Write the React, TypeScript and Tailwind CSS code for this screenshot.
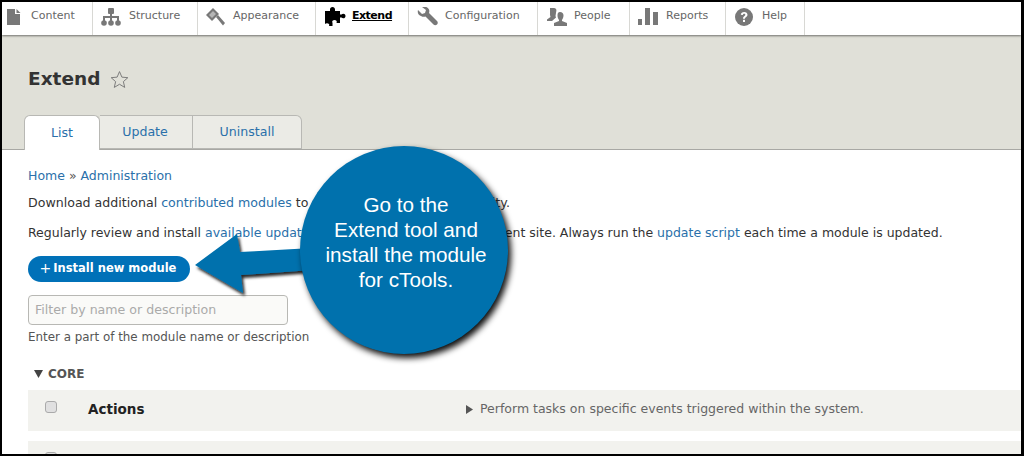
const font = "font-['DejaVu_Sans',sans-serif]";

function ContentIcon() {
  return (
    <svg width="14" height="16" viewBox="0 0 14 16" fill="#787878">
      <path d="M0 0h8v5h5v11H0z" />
      <path d="M9.500 0l4 4h-4z" />
    </svg>
  );
}

function StructureIcon() {
  return (
    <svg width="20" height="18" viewBox="0 0 20 18" fill="#787878">
      <rect x="7" y="0" width="6" height="6" rx="1" />
      <rect x="9" y="5" width="2" height="8" />
      <rect x="2" y="8" width="16" height="2" />
      <rect x="2" y="8" width="2" height="5" />
      <rect x="16" y="8" width="2" height="5" />
      <circle cx="3" cy="15" r="2.800" />
      <circle cx="10" cy="15" r="2.800" />
      <circle cx="17" cy="15" r="2.800" />
    </svg>
  );
}

function AppearanceIcon() {
  return (
    <svg width="20" height="18" viewBox="0 0 20 18" fill="#787878">
      <path d="M0 7L7 0l6 6-7 7z" />
      <path d="M3 7l4-4 3 3-4 4z" fill="#fff" opacity="0.45" />
      <path d="M10 9l2-2 7 8-2 2.500z" />
    </svg>
  );
}

function ExtendIcon() {
  return (
    <svg width="21" height="19" viewBox="0 0 21 19" fill="#000">
      <path d="M0 4h5V2.500C5 1 6 0 7.500 0S10 1 10 2.500V4h5v3.500h1.500c1-1.200 4-1.200 4 1.500s-3 2.700-4 1.500H15V16h-3.500c1-2-0.500-3-2-3s-3 1-2 3v3H4c1-2-0.500-2.800-2-2.800-.8 0-1.500.3-2 .8z" />
    </svg>
  );
}

function ConfigIcon() {
  return (
    <svg width="21" height="20" viewBox="0 0 21 20" fill="#787878">
      <path d="M1 3l4 4 3-1 1-3-4-3c3-.8 6 0 7 2.500.5 1.200.4 2.500 0 3.500l8 8c1 1 1 2.500 0 3.500s-2.500 1-3.500 0l-8-8c-1.200.5-3 .5-4.500-.5C1 8 .3 5.500 1 3z" />
    </svg>
  );
}

function PeopleIcon() {
  return (
    <svg width="20" height="18" viewBox="0 0 20 18" fill="#787878">
      <path d="M3 0h4c1.500 0 2.500 1 2.400 2.500L8.500 8l.5 1.500L5 13H0v-1.500L3.500 9 3 7z" />
      <path d="M13 4c2.200 0 3.500 1.500 3.500 3.500 0 1.500-.8 3.500-1.500 4.500v1l5 2v3H7v-3l5-2v-1c-.8-1-1.500-3-1.500-4.500C10.500 5.500 11 4 13 4z" />
    </svg>
  );
}

function ReportsIcon() {
  return (
    <svg width="20" height="18" viewBox="0 0 20 18" fill="#787878">
      <rect x="0" y="11" width="4" height="6" />
      <rect x="7" y="0" width="5" height="17" />
      <rect x="15" y="4" width="5" height="13" />
    </svg>
  );
}

function HelpIcon() {
  return (
    <svg width="18" height="18" viewBox="0 0 18 18">
      <circle cx="9" cy="9" r="9" fill="#787878" />
      <path d="M5.800 6.800C6 5 7.300 4 9.200 4c2 0 3.300 1.100 3.300 2.800 0 2.300-2.500 2.300-2.500 4H8c0-2.700 2.300-2.700 2.300-4 0-.6-.4-1-1.100-1-.8 0-1.200.5-1.300 1.200z" fill="#fff" />
      <rect x="8" y="11.800" width="2" height="2.200" fill="#fff" />
    </svg>
  );
}

const navItems = [
  { label: "Content", icon: <ContentIcon />, width: "w-[91px]", pad: "pl-[5px]", gap: "gap-[10px]" },
  { label: "Structure", icon: <StructureIcon />, width: "w-[105px]", pad: "pl-[8px]", gap: "gap-[8px]" },
  { label: "Appearance", icon: <AppearanceIcon />, width: "w-[118px]", pad: "pl-[8px]", gap: "gap-[7px]" },
  { label: "Extend", icon: <ExtendIcon />, width: "w-[93px]", pad: "pl-[9px]", gap: "gap-[6px]", active: true },
  { label: "Configuration", icon: <ConfigIcon />, width: "w-[129px]", pad: "pl-[8px]", gap: "gap-[7px]" },
  { label: "People", icon: <PeopleIcon />, width: "w-[92px]", pad: "pl-[9px]", gap: "gap-[7px]" },
  { label: "Reports", icon: <ReportsIcon />, width: "w-[96px]", pad: "pl-[8px]", gap: "gap-[8px]" },
  { label: "Help", icon: <HelpIcon />, width: "w-[79px]", pad: "pl-[9px]", gap: "gap-[9px]" },
];

function Callout() {
  return (
    <>
      <svg className="absolute left-[188px] top-[226px]" width="125" height="72" viewBox="190 228 125 72">
        <defs>
          <filter id="arrowShadow" x="-20%" y="-20%" width="140%" height="150%">
            <feDropShadow dx="2" dy="3" stdDeviation="1.500" floodColor="#000" floodOpacity="0.85" />
          </filter>
        </defs>
        <path d="M195 265L237 234L240 252L312 248V270L241 275L243 293z" fill="#0071ad" filter="url(#arrowShadow)" />
      </svg>
      <div className="absolute left-[298px] top-[144px] flex h-[208px] w-[208px] justify-center rounded-full bg-[#0071ad] pl-[4px] pt-[46px] shadow-[3px_4px_6px_rgba(0,0,0,0.95)]">
        <p className="whitespace-nowrap text-center font-['Liberation_Sans',sans-serif] text-[20.700px] leading-[25px] text-white">
          Go to the
          <br />
          Extend tool and
          <br />
          install the module
          <br />
          for cTools.
        </p>
      </div>
    </>
  );
}

export default function App() {
  return (
    <div className={`relative h-[456px] w-[1024px] overflow-hidden border-b-2 border-l-2 border-r-[3px] border-t-2 border-black bg-white ${font} text-[13px] text-[#333]`}>
      <nav className="relative z-10 flex h-[33px] bg-white shadow-[0_1px_2px_rgba(0,0,0,0.5)]">
        {navItems.map((item) => (
          <div
            key={item.label}
            className={`flex items-center border-r border-[#d8d8d4] pb-[4px] text-[11px] ${item.width} ${item.pad} ${item.gap} ${item.active ? "font-bold tracking-[-0.5px] text-black" : "text-[#666]"}`}
          >
            {item.icon}
            <span className={item.active ? "underline" : ""}>{item.label}</span>
          </div>
        ))}
      </nav>

      <header className="h-[115px] border-b border-[#a8a8a4] bg-[#e0e0d8]">
        <div className="flex items-center gap-[10px] pl-[26px] pt-[32px]">
          <h1 className="text-[18.500px] font-bold leading-[24px] text-[#333]">Extend</h1>
          <svg width="19" height="19" viewBox="0 0 24 24" fill="none" stroke="#777" strokeWidth="1.200">
            <path d="M12 2l3 7 7.500.7-5.600 5 1.700 7.300L12 18l-6.600 4 1.700-7.300-5.600-5L9 9z" />
          </svg>
        </div>
        <div className="flex pl-[22px] pt-[24px] text-[12.600px]">
          <div className="z-10 flex h-[35px] w-[76px] items-center justify-center rounded-t-md border border-b-0 border-[#b8b8b4] bg-white pt-[1px] text-[#2a70aa]">List</div>
          <div className="flex h-[34px] w-[93px] items-center justify-center border-y border-r border-[#b8b8b4] bg-[#ebebe6] pr-[2px] pt-[1px] text-[#2a70aa]">Update</div>
          <div className="flex h-[34px] w-[109px] items-center justify-center rounded-tr-md border-y border-r border-[#b8b8b4] bg-[#ebebe6] pt-[1px] text-[#2a70aa]">Uninstall</div>
        </div>
      </header>

      <main className="pl-[26px] pt-[18px]">
        <div className="text-[12.500px] leading-[16px] text-[#2a70aa]">
          Home <span className="text-[#555]">»</span> Administration
        </div>
        <p className="mt-[11px] text-[12.600px] leading-[16px]">
          Download additional <span className="text-[#2a70aa]">contributed modules</span> to extend your site's functionality.
        </p>
        <p className="mt-[14px] text-[12.500px] leading-[16px]">
          Regularly review and install <span className="text-[#2a70aa]">available updates</span> to maintain a secure and current site. Always run the <span className="text-[#2a70aa]">update script</span> each time a module is updated.
        </p>
        <button className="mt-[15px] flex h-[26px] w-[162px] items-center justify-center gap-[2px] rounded-full bg-[#0071b8] pr-[2px] text-[11.500px] font-bold text-white">
          <span className="mb-[2px] text-[14px] font-normal leading-none">+</span>
          <span>Install new module</span>
        </button>
        <input
          readOnly
          placeholder="Filter by name or description"
          className="mt-[13px] block h-[30px] w-[260px] rounded-sm border border-[#b8b8b4] bg-[#fafaf8] px-[6px] pb-[2px] text-[12.600px] placeholder:text-[#aaa]"
        />
        <p className="mt-[4px] text-[11.900px] leading-[16px] text-[#555]">Enter a part of the module name or description</p>

        <div className="mt-[20px] flex items-center gap-[5px] pl-[6px] text-[12px] font-bold text-[#555]">
          <svg width="9" height="8" viewBox="0 0 9 8" fill="#444">
            <path d="M0 0h9L4.500 8z" />
          </svg>
          CORE
        </div>
        <div className="mt-[7px] flex h-[41px] items-center bg-[#f2f2ee]">
          <span className="mb-[7px] ml-[17px] h-[12px] w-[12px] rounded-[3px] border border-[#aaa] bg-[#e0e0e0]" />
          <span className="mb-[3px] ml-[31px] w-[378px] text-[13.500px] font-bold text-[#222]">Actions</span>
          <svg className="mb-[3px]" width="7" height="9" viewBox="0 0 7 9" fill="#555">
            <path d="M0 0l7 4.500L0 9z" />
          </svg>
          <span className="mb-[3px] ml-[7px] text-[12.500px] text-[#666]">Perform tasks on specific events triggered within the system.</span>
        </div>
        <div className="mt-[10px] flex h-[41px] items-center bg-[#f2f2ee]">
          <span className="mb-[7px] ml-[17px] h-[12px] w-[12px] rounded-[3px] border border-[#aaa] bg-[#e0e0e0]" />
          <span className="mb-[3px] ml-[31px] text-[13.500px] font-bold text-[#222]">Activity Tracker</span>
        </div>
      </main>

      <Callout />
    </div>
  );
}
